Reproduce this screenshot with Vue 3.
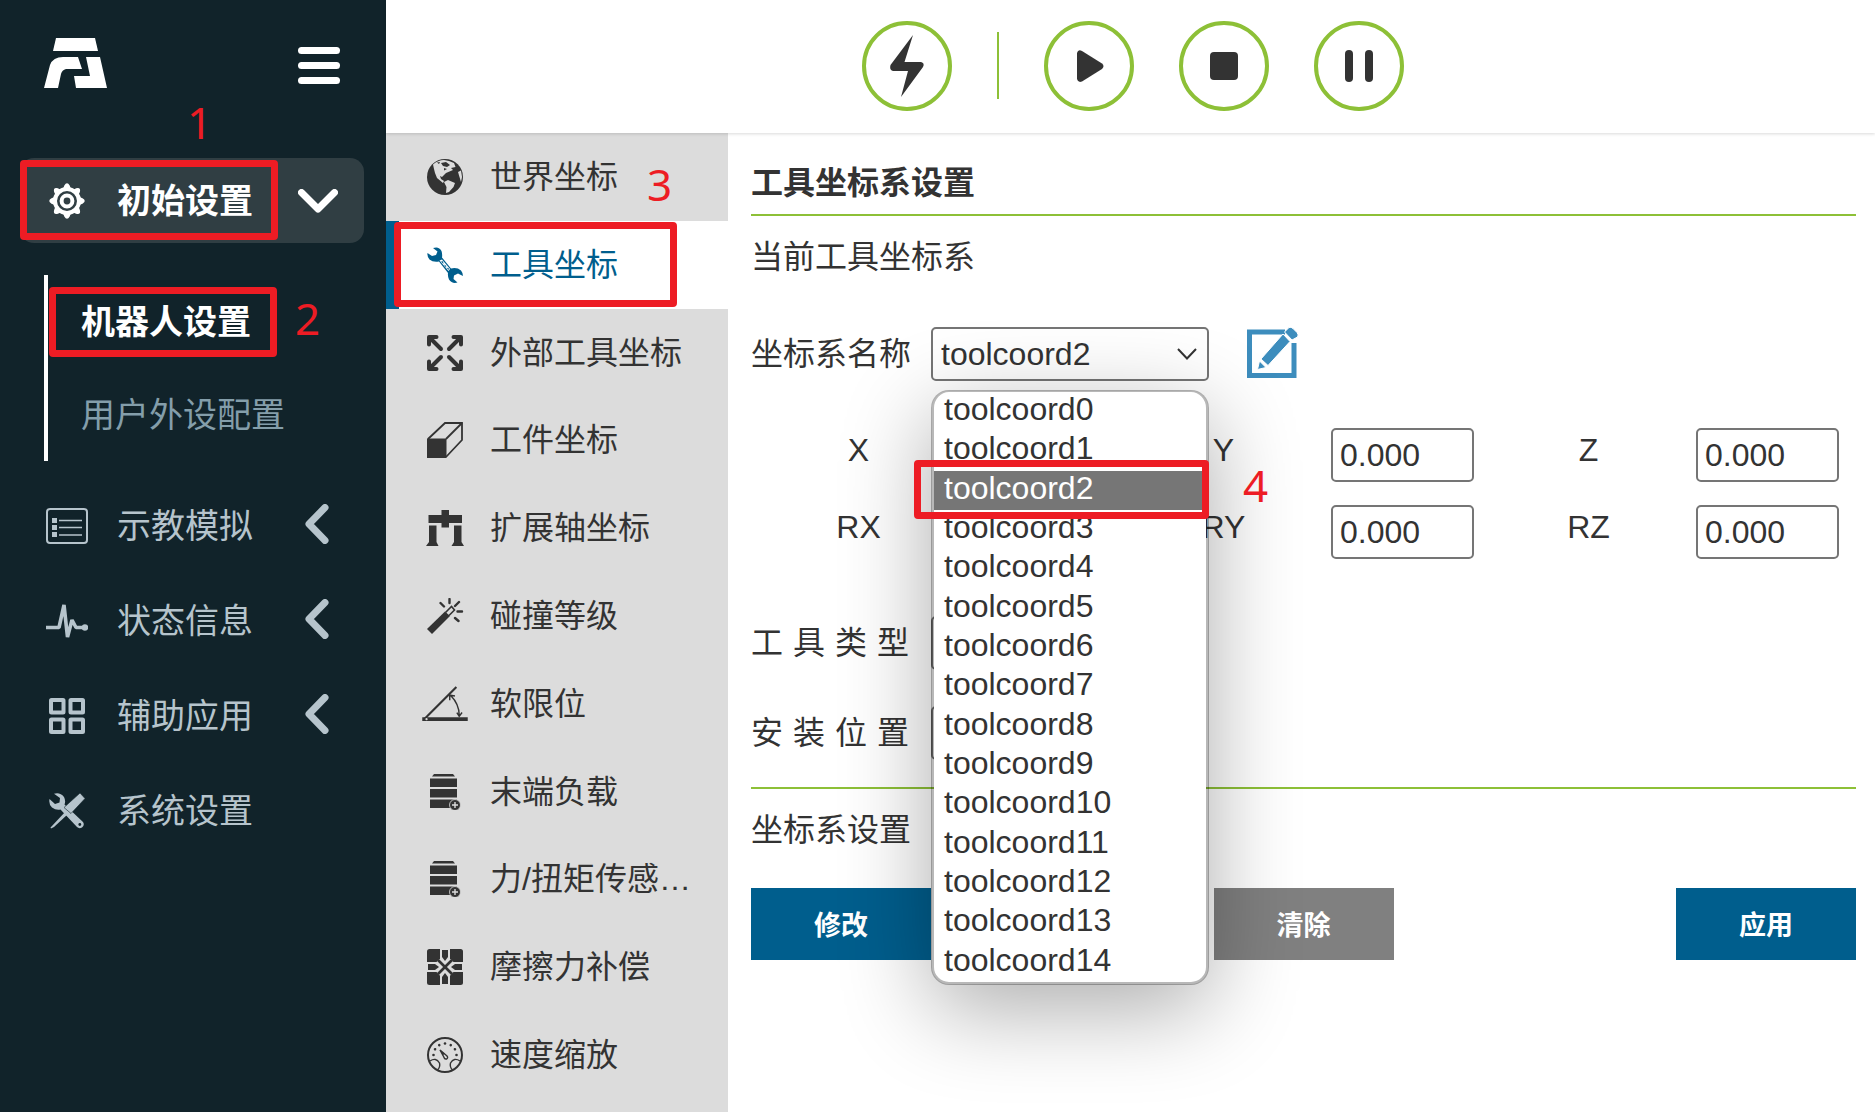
<script setup>
import { reactive, ref } from 'vue'

const mainNav = [
  { icon: 'list', label: '示教模拟', arrow: true },
  { icon: 'pulse', label: '状态信息', arrow: true },
  { icon: 'grid', label: '辅助应用', arrow: true },
  { icon: 'tools', label: '系统设置', arrow: false },
]

const subNav = [
  { icon: 'globe', label: '世界坐标', step: '3' },
  { icon: 'wrench', label: '工具坐标', active: true },
  { icon: 'expand', label: '外部工具坐标' },
  { icon: 'box', label: '工件坐标' },
  { icon: 'gantry', label: '扩展轴坐标' },
  { icon: 'wand', label: '碰撞等级' },
  { icon: 'angle', label: '软限位' },
  { icon: 'barrel', label: '末端负载' },
  { icon: 'barrel', label: '力/扭矩传感…' },
  { icon: 'cross', label: '摩擦力补偿' },
  { icon: 'gauge', label: '速度缩放' },
]

const coords = Array.from({ length: 15 }, (_, i) => `toolcoord${i}`)
const current = ref('toolcoord2')
const toolType = ref('')
const mount = ref('')

const axes = ['X', 'Y', 'Z', 'RX', 'RY', 'RZ']
const pose = reactive({ X: '0.000', Y: '0.000', Z: '0.000', RX: '0.000', RY: '0.000', RZ: '0.000' })
</script>

<template>
  <svg class="sprite" aria-hidden="true">
    <symbol id="i-gear" viewBox="0 0 36 36">
      <g fill="currentColor">
        <path v-for="a in 8" :key="a" d="M12 7 Q15 5.500 15.300 2.500 Q18 -2 20.700 2.500 Q21 5.500 24 7 Z" :transform="`rotate(${a * 45} 18 18)`" />
      </g>
      <circle cx="18" cy="18" r="12" fill="none" stroke="currentColor" stroke-width="4" />
      <circle cx="18" cy="18" r="5.4" fill="none" stroke="currentColor" stroke-width="4" />
    </symbol>
    <symbol id="i-list" viewBox="0 0 42 36">
      <rect x="1" y="1" width="40" height="34" rx="3" fill="none" stroke="currentColor" stroke-width="2" />
      <path d="M6 10h5v5H6zM6 17h5v5H6zM6 24h5v5H6z" fill="currentColor" />
      <path d="M13 12.5h23M13 19.5h23M13 27h23" stroke="currentColor" stroke-width="1.4" />
    </symbol>
    <symbol id="i-pulse" viewBox="0 0 42 36">
      <path d="M0 24.5H13L18 2L21.5 34L26 17L30 24.5H38" fill="none" stroke="currentColor" stroke-width="3.6" stroke-linejoin="bevel" />
      <circle cx="39" cy="24.5" r="3.2" fill="currentColor" />
    </symbol>
    <symbol id="i-grid" viewBox="0 0 36 36">
      <g fill="none" stroke="currentColor" stroke-width="4">
        <rect x="2" y="2" width="12.500" height="12.500" rx=".5" /><rect x="21.500" y="2" width="12.500" height="12.500" rx=".5" />
        <rect x="2" y="21.500" width="12.500" height="12.500" rx=".5" /><rect x="21.500" y="21.500" width="12.500" height="12.500" rx=".5" />
      </g>
    </symbol>
    <symbol id="i-tools" viewBox="0 0 36 36">
      <path fill="currentColor" d="M5 .8Q11-1 15 4Q17 8 15.5 11.5L34 29Q36 32 33 34.500Q30 36 28 34L11.500 16.500Q7 17.500 3 14.500Q-.5 11 .5 6L6 11L10.500 9.500L11 5Z" />
      <path d="M31 0L36 5.500L22 20.500L15 14.500Z" fill="currentColor" stroke="#11232a" stroke-width=".6" />
      <path d="M16.500 18.500L19 21L5 34L2 35.500L1.500 34.500Z" fill="currentColor" />
      <circle cx="30.800" cy="31.500" r="1.400" fill="#11232a" />
    </symbol>
    <symbol id="i-globe" viewBox="0 0 36 36">
      <circle cx="18" cy="18" r="18" fill="currentColor" />
      <path fill="#dcdcdc" d="M6 5.500Q11 1 17 1L22 2L27 4L28.500 8L24 9L26 11L19 14L15 18L13 17L14 20L17 22L16 24L10 19L8 14L7 10Z" />
      <path fill="#dcdcdc" d="M17 23L21 21L28 24L26.500 28L22 33L19 34L19.500 28Z" />
      <path fill="#dcdcdc" d="M31 13L34 11.500L35 18L34 23L32.500 18Z" />
      <path fill="currentColor" d="M14 4L19 3L23 6L20 8L16 7ZM10 3.500L13 3L12 5ZM17 9L20 10L17 11.500Z" />
    </symbol>
    <symbol id="i-wrench" viewBox="0 0 36 36">
      <path fill="currentColor" d="M6 1Q12-1 14.500 4Q15.500 7 15 10.500L24 21.500Q30 20 34 23.500Q36 26 36 29L31 26.500L27 28.500L26.500 32L30.500 35.500Q25 37 22 32.500Q20.500 29 21 26L12 14.500Q6 15.500 2.500 12.500Q0 9.500 .5 6L5 9L9 8L10.500 4.500Z" />
      <path fill="#fff" d="M12.500 13.500L15 12.500L23 22L21.500 24Z" />
      <path fill="currentColor" d="M14 14.500L16 14.200L16.500 17ZM19.500 20.500L22 21.500L21.500 23ZM17 17.500L19.500 19L18.500 20Z" />
    </symbol>
    <symbol id="i-expand" viewBox="0 0 36 36">
      <g v-for="a in 4" :key="a" :transform="`rotate(${a * 90} 18 18)`" fill="none" stroke="currentColor" stroke-linecap="round">
        <path d="M3 3L14 14" stroke-width="4" />
        <path d="M2 9.500V2H9.500" stroke-width="4" stroke-linejoin="round" />
      </g>
    </symbol>
    <symbol id="i-box" viewBox="0 0 36 36">
      <path d="M1 17L18 1H35V18L19 35" fill="none" stroke="currentColor" stroke-width="1.800" />
      <path d="M19 17L35 1" stroke="currentColor" stroke-width="1.800" />
      <path d="M0 16.500H19.500V36H0Z" fill="currentColor" />
    </symbol>
    <symbol id="i-gantry" viewBox="0 0 38 36">
      <path fill="currentColor" d="M15.500 0H23V5H36V13H23V17.500H15.500V13H2.500V5H15.500ZM3 15.500H10.500V32L12.500 36H0L3 32ZM28 15.500H35.500V32L38 36H25.500L28 32Z" />
    </symbol>
    <symbol id="i-wand" viewBox="0 0 36 36">
      <path d="M0 31L18 13.500L23 18L5 36Z" fill="currentColor" />
      <path d="M18.500 14.500L24.500 8.500L27.500 12L22 17.500" fill="none" stroke="currentColor" stroke-width="1.600" />
      <path d="M22.500 1V5M13.500 5L17 8.500M32 4L28 8M30.500 13.500H35M28 20L31.500 23" stroke="currentColor" stroke-width="2.400" stroke-linecap="round" />
    </symbol>
    <symbol id="i-angle" viewBox="0 0 48 38">
      <path d="M2 35L36 1" stroke="currentColor" stroke-width="2.200" />
      <path d="M0 33H48V37H0Z" fill="currentColor" />
      <circle cx="4.500" cy="35" r="1.200" fill="#dcdcdc" />
      <path d="M30 10Q39 19 39 31M29 15V9.500L34.500 10.500M36.500 28L39 32L42 28" fill="none" stroke="currentColor" stroke-width="1.500" />
    </symbol>
    <symbol id="i-barrel" viewBox="0 0 30 36">
      <path fill="currentColor" d="M4 0H23L25 2.500H2ZM0 4.500H27V13H0ZM0 15H27V23.500H0ZM0 25.500H27V34H0Z" />
      <circle cx="25" cy="31" r="5.500" fill="currentColor" stroke="#dcdcdc" stroke-width=".8" />
      <path d="M25 28V34M22 31H28" stroke="#dcdcdc" stroke-width="1.400" />
    </symbol>
    <symbol id="i-cross" viewBox="0 0 36 36">
      <g v-for="a in 4" :key="a" :transform="`rotate(${a * 90} 18 18)`">
        <path fill="currentColor" d="M2.500 0H13V9.500L9.500 13H0V2.500Q0 0 2.500 0Z" />
        <path fill="currentColor" d="M15 1H21V8L18 12L15 8Z" />
        <path d="M11 11L18 18" stroke="currentColor" stroke-width="2.600" />
      </g>
    </symbol>
    <symbol id="i-gauge" viewBox="0 0 36 36">
      <circle cx="18" cy="18" r="17" fill="none" stroke="currentColor" stroke-width="2" />
      <path d="M3 24Q9 20 12.500 26Q13.500 30 10.500 33M33 24Q27 20 23.500 26Q22.500 30 25.500 33M13 13L20 19Q21.500 21 19.500 22Q17.500 22.500 16.800 20Z" fill="none" stroke="currentColor" stroke-width="1.400" />
      <path d="M13 13L17.500 16.500L16 18.500Z" fill="currentColor" />
      <g fill="currentColor">
        <circle v-for="a in 7" :key="a" cx="18" cy="6.500" r="1.300" :transform="`rotate(${a * 30 - 120} 18 18)`" />
      </g>
    </symbol>
  </svg>

  <div class="app">
    <aside class="side">
      <div class="brand">
        <svg class="logo" viewBox="0 0 63 50" aria-label="logo">
          <path fill="#fff" d="M12 0H51L54 13H9Z" />
          <path fill="#fff" d="M0 50L6 27Q9 19 19 19H34L38 31H22Q18 32 17 36L14 50Z" />
          <path fill="#fff" d="M42 19H56L63 50H32L30 38H46Z" />
        </svg>
        <button class="burger" aria-label="menu"><i></i><i></i><i></i></button>
      </div>

      <nav class="nav">
        <a href="#" class="item open">
          <svg class="ico"><use href="#i-gear" /></svg>
          <span>初始设置</span>
          <svg class="down" viewBox="0 0 40 24"><path d="M3.500 3.500L20 20L36.500 3.500" /></svg>
          <b class="frame frame-1"></b>
          <b class="step step-1">1</b>
        </a>
        <div class="children">
          <a href="#" class="child on">机器人设置<b class="frame frame-2"></b><b class="step step-2">2</b></a>
          <a href="#" class="child">用户外设配置</a>
        </div>
        <a v-for="n in mainNav" :key="n.label" href="#" class="item">
          <svg class="ico"><use :href="`#i-${n.icon}`" /></svg>
          <span>{{ n.label }}</span>
          <svg v-if="n.arrow" class="left" viewBox="0 0 24 40"><path d="M20 3.500L4 20L20 36.500" /></svg>
        </a>
      </nav>
    </aside>

    <div class="page">
      <header class="bar">
        <button class="round" aria-label="enable">
          <svg viewBox="0 0 90 90"><path d="M51 14L42.500 41H59Q63 42 61 46L39 76L46 50H31Q27 49 28.500 44Z" /></svg>
        </button>
        <span class="split"></span>
        <button class="round" aria-label="start">
          <svg viewBox="0 0 90 90"><path d="M33 32Q34 28 38 30L58 42.500Q61 45 58 48L38 60.500Q34 62 33 58Z" /></svg>
        </button>
        <button class="round" aria-label="stop">
          <svg viewBox="0 0 90 90"><rect x="31" y="31" width="28" height="28" rx="4" /></svg>
        </button>
        <button class="round" aria-label="pause">
          <svg viewBox="0 0 90 90"><rect x="31" y="29" width="8" height="32" rx="4" /><rect x="51" y="29" width="8" height="32" rx="4" /></svg>
        </button>
      </header>

      <div class="body">
        <nav class="sub">
          <a v-for="s in subNav" :key="s.label" href="#" class="tab" :class="{ active: s.active }">
            <svg class="ico"><use :href="`#i-${s.icon}`" /></svg>
            <span>{{ s.label }}</span>
            <b v-if="s.step" class="step step-3">{{ s.step }}</b>
            <b v-if="s.active" class="frame frame-3"></b>
          </a>
        </nav>

        <main class="content">
          <h1>工具坐标系设置</h1>
          <h2>当前工具坐标系</h2>

          <div class="field name">
            <label for="coord">坐标系名称</label>
            <div class="picker">
              <select id="coord" v-model="current">
                <option v-for="c in coords" :key="c">{{ c }}</option>
              </select>
              <svg class="caret" viewBox="0 0 20 12"><path d="M1 1L10 10.500L19 1" /></svg>
              <ul class="menu" role="listbox">
                <li v-for="c in coords" :key="c" role="option" :class="{ picked: c === current }">{{ c }}</li>
              </ul>
              <b class="frame frame-4"></b>
              <b class="step step-4">4</b>
            </div>
            <button class="edit" aria-label="edit">
              <svg viewBox="0 0 52 52">
                <path d="M38 5H2.500V48.500H47V16" fill="none" stroke="currentColor" stroke-width="5" />
                <path d="M14 32L36 7L43 14.500L21 38.500ZM12.500 34L19 40.500L10.500 42.500ZM37.500 5L42 .5Q44 -.5 46 1.500L50 5.500Q52 8 50.500 10L45 13Z" fill="currentColor" stroke="#fff" stroke-width="1" />
              </svg>
            </button>
          </div>

          <div class="axes">
            <div v-for="a in axes" :key="a" class="axis">
              <label :for="`axis-${a}`">{{ a }}</label>
              <input :id="`axis-${a}`" v-model="pose[a]" type="text" />
            </div>
          </div>

          <div class="field row">
            <label for="type">工 具 类 型</label>
            <select id="type" v-model="toolType"><option></option></select>
          </div>
          <div class="field row">
            <label for="mount">安 装 位 置</label>
            <select id="mount" v-model="mount"><option></option></select>
          </div>

          <h3>坐标系设置</h3>
          <div class="actions">
            <button>修改</button>
            <button class="muted">清除</button>
            <button>应用</button>
          </div>
        </main>
      </div>
    </div>
  </div>
</template>

<style>
body {
  margin: 0;
  background: #fff;
}
</style>

<style scoped>
.sprite {
  position: absolute;
  width: 0;
  height: 0;
}
.app {
  display: flex;
  min-height: 100vh;
  color: #333;
  font: 32px/44px "Liberation Sans", "Noto Sans CJK SC", sans-serif;
}
.app *,
.app {
  box-sizing: border-box;
}
a {
  color: inherit;
  text-decoration: none;
}
button {
  padding: 0;
  border: 0;
  background: none;
  font: inherit;
  cursor: pointer;
}

/* dark navigation */
.side {
  flex: 0 0 386px;
  padding: 0 22px 0 20px;
  background: #11232a;
  color: #b6c4cc;
  font-size: 34px;
}
.brand {
  display: flex;
  align-items: center;
  justify-content: space-between;
  height: 158px;
  padding: 0 24px 32px;
}
.logo {
  width: 63px;
  height: 50px;
}
.burger {
  display: flex;
  flex-direction: column;
  gap: 8px;
  width: 42px;
  padding-top: 4px;
}
.burger i {
  height: 7px;
  border-radius: 4px;
  background: #fff;
}
.nav {
  display: flex;
  flex-direction: column;
  gap: 10px;
}
.item {
  position: relative;
  display: flex;
  align-items: center;
  height: 85px;
  border-radius: 14px;
}
.item .ico {
  width: 42px;
  height: 36px;
  margin: 0 29px 0 26px;
}
.item span {
  flex: 1;
}
.open {
  background: #303e43;
  color: #fff;
  font-weight: 700;
}
.down,
.left {
  fill: none;
  stroke: currentColor;
  stroke-width: 7;
  stroke-linecap: round;
  stroke-linejoin: round;
}
.down {
  width: 40px;
  height: 24px;
  margin-right: 26px;
}
.left {
  width: 24px;
  height: 40px;
  margin: -4px 35px 0 0;
}
.children {
  margin: 22px 0 12px 24px;
  border-left: 4px solid #fff;
}
.child {
  position: relative;
  display: flex;
  align-items: center;
  height: 93px;
  padding-left: 33px;
  color: #849eaa;
}
.child.on {
  color: #fff;
  font-weight: 700;
}

/* top bar */
.page {
  flex: 1;
  min-width: 0;
  display: flex;
  flex-direction: column;
}
.bar {
  position: relative;
  display: flex;
  align-items: center;
  justify-content: center;
  gap: 45px;
  height: 133px;
  padding: 0 0 2px 4px;
  box-shadow: 0 1px 3px rgba(0, 0, 0, 0.15);
}
.round {
  width: 90px;
  height: 90px;
  border: 4px solid #8dc037;
  border-radius: 50%;
}
.round svg {
  display: block;
  width: 90px;
  height: 90px;
  margin: -4px;
  fill: #333;
}
.split {
  width: 2px;
  height: 67px;
  background: #8dc037;
}

/* secondary navigation */
.body {
  flex: 1;
  display: flex;
}
.sub {
  flex: 0 0 342px;
  display: flex;
  flex-direction: column;
  padding-bottom: 13px;
  background: #dcdcdc;
}
.tab {
  position: relative;
  flex: 1;
  display: flex;
  align-items: center;
  min-height: 80px;
  max-height: 100px;
  padding-left: 35px;
}
.tab .ico {
  width: 48px;
  height: 36px;
  margin-right: 21px;
}
.tab.active {
  padding-left: 22px;
  border-left: 13px solid #005e8d;
  background: #fff;
  color: #005e8d;
}

/* settings form */
.content {
  flex: 1;
  min-width: 0;
  padding: 28px 19px 0 23px;
}
h1,
h2,
h3 {
  margin: 0;
  font-size: 32px;
  line-height: 44px;
  font-weight: 400;
}
h1 {
  padding-bottom: 9px;
  border-bottom: 2px solid #8dc037;
  font-weight: 700;
}
h2 {
  margin-top: 19px;
}
h3 {
  margin-top: 27px;
  padding-top: 19px;
  border-top: 2px solid #8dc037;
}
select,
input {
  height: 54px;
  margin: 0;
  padding: 0 7px;
  border: 2px solid #757575;
  border-radius: 5px;
  background: #fff;
  color: #333;
  font: inherit;
}
select {
  display: block;
  width: 278px;
  padding: 0 8px;
  appearance: none;
}
.field {
  display: flex;
  align-items: center;
}
.field label {
  width: 158px;
  margin-right: 22px;
  white-space: nowrap;
}
.name {
  margin-top: 48px;
}
.picker {
  position: relative;
}
.caret {
  position: absolute;
  top: 21px;
  right: 12px;
  width: 20px;
  height: 12px;
  fill: none;
  stroke: #333;
  stroke-width: 2;
}
.menu {
  position: absolute;
  z-index: 2;
  top: 63px;
  left: 0;
  display: flex;
  flex-direction: column;
  width: 278px;
  height: 595px;
  margin: 0;
  padding: 0;
  border: 3px solid rgba(0, 0, 0, 0.28);
  border-top-width: 2px;
  border-radius: 18px;
  background: #fff;
  background-clip: padding-box;
  box-shadow: 0 24px 90px rgba(0, 0, 0, 0.33);
  list-style: none;
  overflow: hidden;
}
.menu li {
  flex: 1;
  padding-left: 10px;
  line-height: 35px;
}
.menu .picked {
  background: #767676;
  color: #fff;
}
.edit {
  width: 52px;
  height: 52px;
  margin: -2px 0 0 38px;
  color: #3d8dbd;
}
.edit svg {
  display: block;
}
.axes {
  display: grid;
  grid-template-columns: repeat(3, 1fr);
  row-gap: 23px;
  margin: 47px 10px 57px 0;
}
.axis {
  display: flex;
  align-items: flex-start;
  padding-right: 7px;
}
.axis label {
  flex: 1;
  text-align: center;
}
.axis input {
  width: 143px;
}
.row {
  margin-bottom: 36px;
}
.row label {
  text-align-last: justify;
}
.row select {
  width: 270px;
}
.row + h3 {
  margin-top: -9px;
}
.actions {
  display: flex;
  justify-content: space-between;
  margin-top: 36px;
}
.actions button {
  width: 180px;
  height: 72px;
  padding-top: 3px;
  background: #005e8d;
  color: #fff;
  font-size: 27px;
  font-weight: 700;
}
.actions .muted {
  background: #808080;
}

/* step markers lying over the interface */
.frame,
.step {
  position: absolute;
  z-index: 3;
  pointer-events: none;
}
.frame {
  border: 7px solid #ed1c24;
  border-radius: 4px;
}
.step {
  color: #ed1c24;
  font: 400 44px/44px "Noto Sans", sans-serif;
}
.frame-1 {
  top: 2px;
  left: 0;
  width: 258px;
  height: 80px;
}
.step-1 {
  top: -58px;
  left: 167px;
}
.frame-2 {
  top: 12px;
  left: 1px;
  width: 228px;
  height: 70px;
}
.step-2 {
  top: 21px;
  left: 247px;
}
.step-3 {
  top: 29px;
  left: 261px;
}
.frame-3 {
  top: 1px;
  left: -5px;
  width: 283px;
  height: 85px;
}
.frame-4 {
  top: 133px;
  left: -17px;
  width: 295px;
  height: 59px;
}
.step-4 {
  top: 136px;
  left: 312px;
}
</style>
